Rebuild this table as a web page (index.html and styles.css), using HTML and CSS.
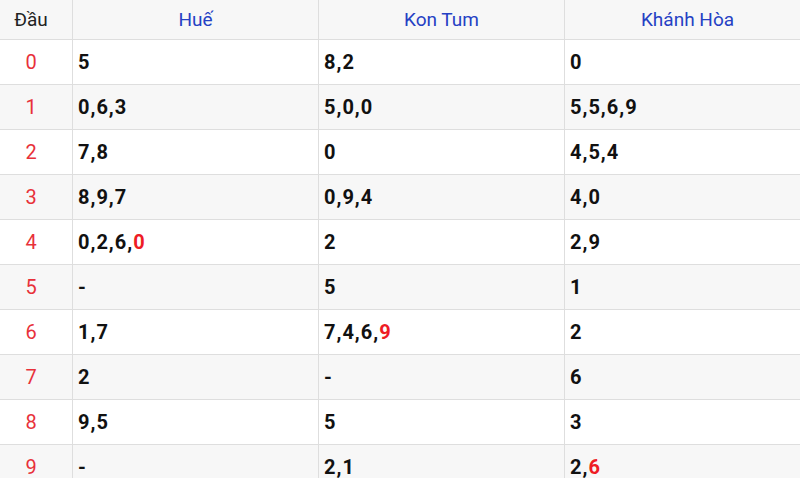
FILE: index.html
```html
<!DOCTYPE html>
<html lang="vi">
<head>
<meta charset="utf-8">
<link rel="stylesheet" href="styles.css">
</head>
<body>
<div class="wrap">
<table class="loto">
  <colgroup><col class="c0"><col class="c1"><col class="c1"><col class="c1"></colgroup>
  <thead>
    <tr><th class="dau">Đầu</th><th>Huế</th><th>Kon Tum</th><th>Khánh Hòa</th></tr>
  </thead>
  <tbody>
    <tr><td class="dau">0</td><td>5</td><td>8,2</td><td>0</td></tr>
    <tr><td class="dau">1</td><td>0,6,3</td><td>5,0,0</td><td>5,5,6,9</td></tr>
    <tr><td class="dau">2</td><td>7,8</td><td>0</td><td>4,5,4</td></tr>
    <tr><td class="dau">3</td><td>8,9,7</td><td>0,9,4</td><td>4,0</td></tr>
    <tr><td class="dau">4</td><td>0,2,6,<span class="hl">0</span></td><td>2</td><td>2,9</td></tr>
    <tr><td class="dau">5</td><td>-</td><td>5</td><td>1</td></tr>
    <tr><td class="dau">6</td><td>1,7</td><td>7,4,6,<span class="hl">9</span></td><td>2</td></tr>
    <tr><td class="dau">7</td><td>2</td><td>-</td><td>6</td></tr>
    <tr><td class="dau">8</td><td>9,5</td><td>5</td><td>3</td></tr>
    <tr><td class="dau">9</td><td>-</td><td>2,1</td><td>2,<span class="hl">6</span></td></tr>
  </tbody>
</table>
</div>
</body>
</html>
```
FILE: styles.css
```css
html, body {
  margin: 0;
  padding: 0;
  overflow: hidden;
  background: #fff;
}
.wrap {
  width: 800px;
  height: 478px;
  overflow: hidden;
}
.loto {
  border-collapse: collapse;
  table-layout: fixed;
  width: 811px;
  margin-top: -1px;
  margin-left: -1px;
  font-family: Roboto, "Noto Sans", sans-serif;
}
.c0 { width: 73px; }
.c1 { width: 246px; }
.loto th, .loto td {
  border: 1px solid #dedede;
  padding: 0 0 0 5px;
  text-align: left;
}
.loto th {
  height: 40px;
  box-sizing: border-box;
  background: #f7f7f7;
  font-weight: 400;
  font-size: 19px;
  color: #2541c4;
  text-align: center;
  padding: 0;
}
.loto th.dau {
  color: #222;
  padding-right: 10px;
}
.loto td {
  height: 44px;
  font-size: 20px;
  letter-spacing: 1px;
  font-weight: 700;
  color: #111;
}
.loto tbody tr:nth-child(even) td {
  background: #f7f7f7;
}
.loto td.dau {
  text-align: center;
  font-weight: 400;
  letter-spacing: 0;
  color: #e8313a;
  padding: 0 10px 0 0;
}
.hl {
  color: #ee1c25;
}
```
